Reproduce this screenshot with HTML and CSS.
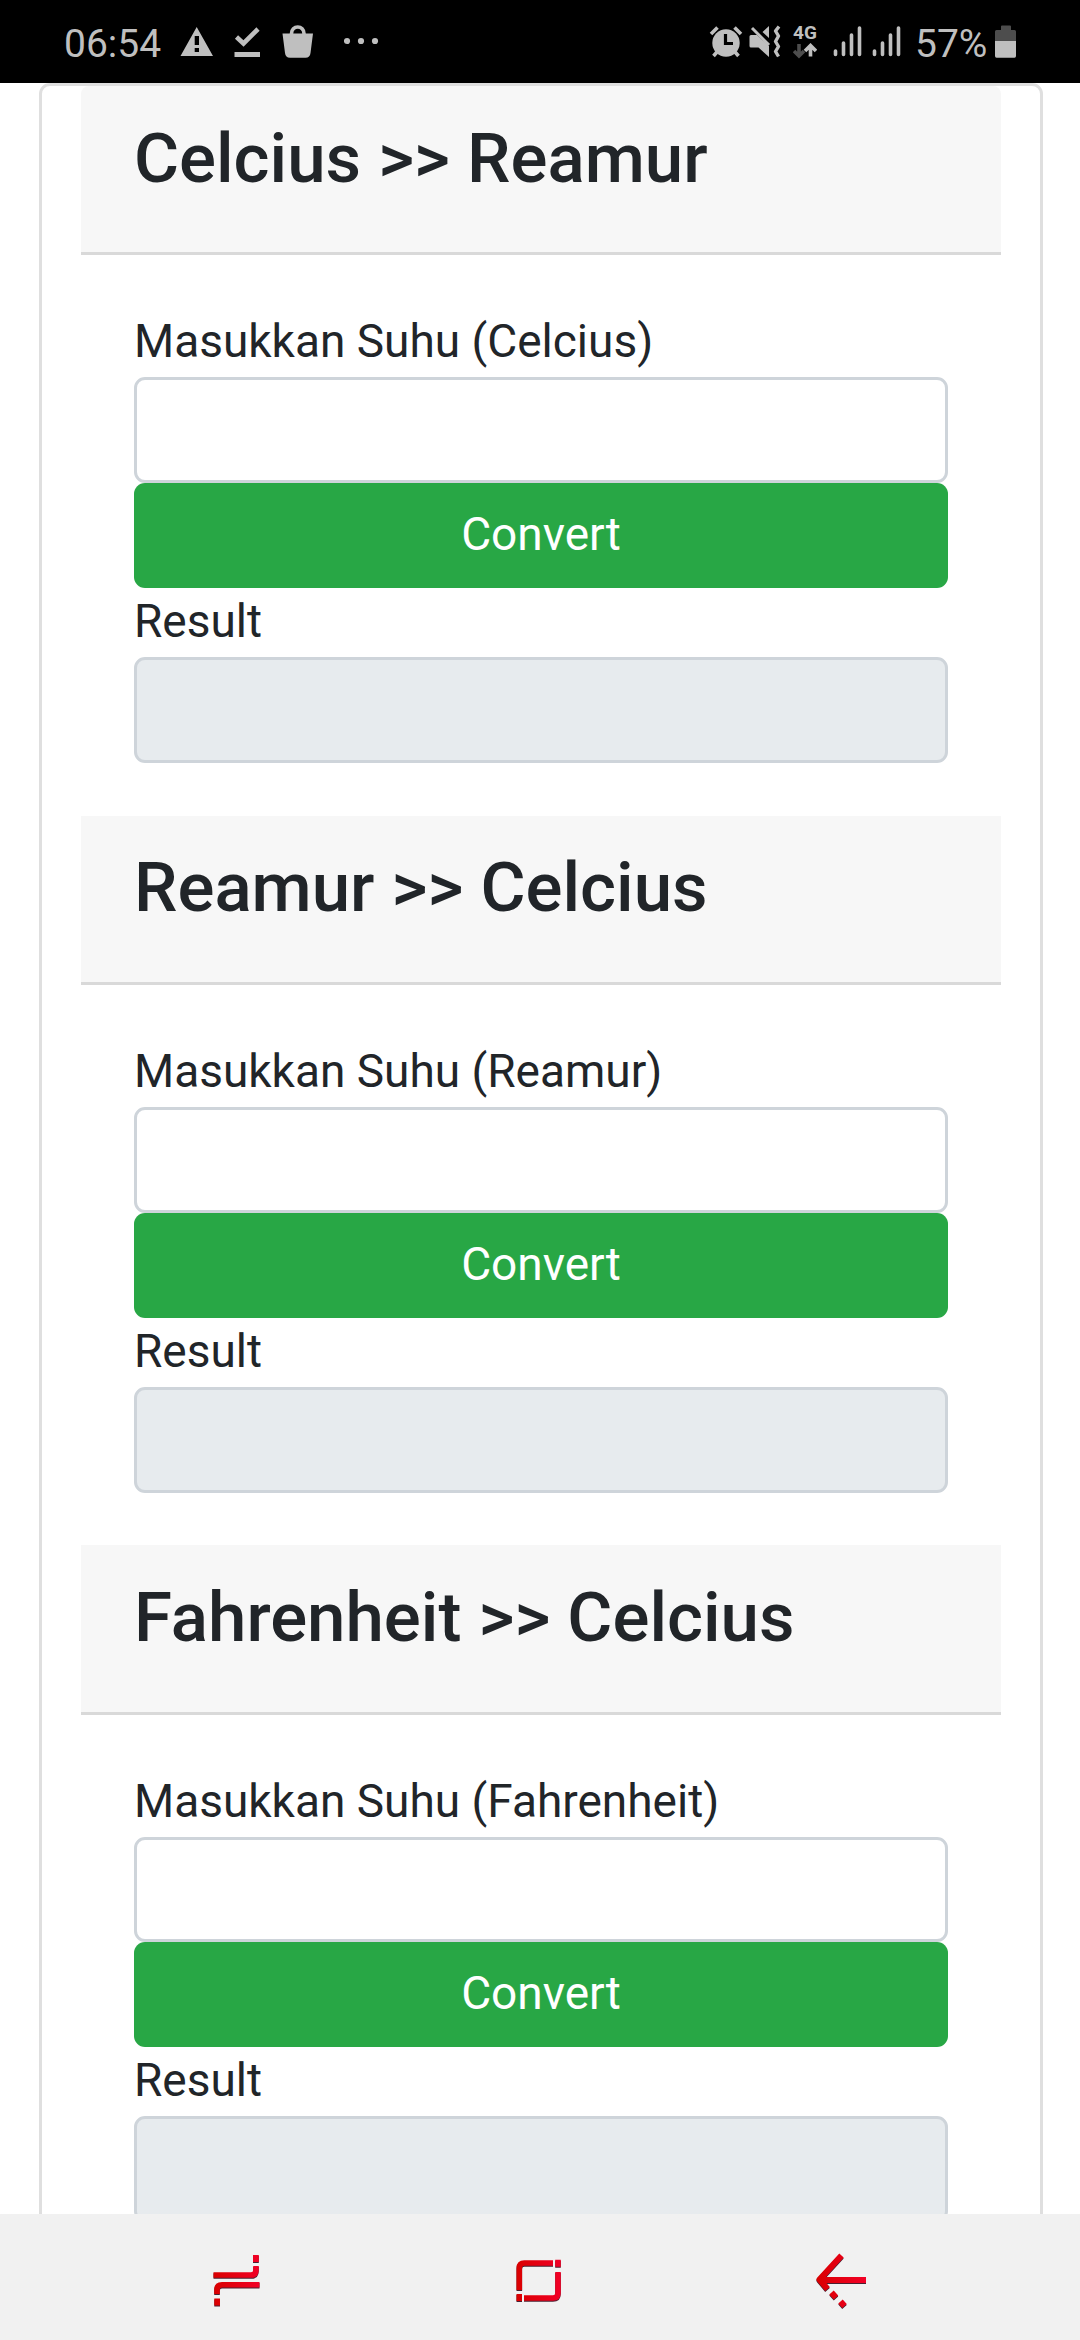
FILE: index.html
```html
<!DOCTYPE html>
<html lang="id">
<head>
<meta charset="utf-8">
<title>Konversi Suhu</title>
<link rel="stylesheet" href="styles.css">
</head>
<body>
<div class="screen">
  <header class="status">
    <div class="status-left">
      <span class="clock">06:54</span>
      <svg class="warn" width="34" height="83" viewBox="180 0 34 83"><path fill-rule="evenodd" d="M196.700 27L213 56H180.500ZM194.700 36V45H199V36ZM194.700 48V52H199V48Z"/></svg>
      <svg class="done" width="26" height="83" viewBox="234 0 26 83"><path d="M236.500 37L243.500 43.500L258 29" fill="none" stroke="#bfbfbf" stroke-width="4.600"/><path d="M234.500 52H260V57H234.500Z"/></svg>
      <svg class="bag" width="31" height="83" viewBox="282 0 31 83"><path d="M282.500 33.500H313L310.500 53Q310 57.700 305.500 57.700H290Q285.500 57.700 285 53Z"/><path d="M291.500 35V33.500A6.200 6.500 0 0 1 304 33.500V35" fill="none" stroke="#bfbfbf" stroke-width="3.600"/></svg>
      <svg class="more" width="35" height="83" viewBox="344 0 35 83"><circle cx="347" cy="41" r="3.100"/><circle cx="361" cy="41" r="3.100"/><circle cx="375" cy="41" r="3.100"/></svg>
    </div>
    <div class="status-right">
      <svg width="34" height="83" viewBox="709 0 34 83"><circle cx="726" cy="43" r="13.700"/><path d="M711 34L717.500 27.500M741 34L734.500 27.500M717 52L713.500 56M735 52L738.500 56" fill="none" stroke="#bfbfbf" stroke-width="3.600"/><path d="M725.500 34V43.500H733" fill="none" stroke="#000" stroke-width="3.200"/></svg>
      <svg class="mute" width="32" height="83" viewBox="749 0 32 83"><path d="M749.500 36.500Q749.500 35 751 35H757L769 46V57L758.500 47.500H751Q749.500 47.500 749.500 46ZM762.500 32L769 26V38Z"/><path d="M752 28L769 45" fill="none" stroke="#bfbfbf" stroke-width="3"/><path d="M779 26.500L775.500 31L778.500 36L775.500 41.500L778.500 46.500L775.500 51.500L778.500 56.500" fill="none" stroke="#bfbfbf" stroke-width="3.400" stroke-linejoin="round"/></svg>
      <div class="network">
        <span class="network-label">4G</span>
        <svg width="24" height="16" viewBox="794 43 24 16"><path d="M800 44V56M795 51L800 56L805 51" fill="none" stroke="#4d4d4d" stroke-width="3.600"/><path d="M811.500 56.500V46M806 51L811.500 45.500L817 51" fill="none" stroke="#bfbfbf" stroke-width="3.600"/></svg>
      </div>
      <svg class="signal" width="29" height="83" viewBox="833 0 29 83"><path d="M835.500 51V54.500M843.500 43V54.500M851.500 35V54.500M859.500 28V54.500" fill="none" stroke="#bfbfbf" stroke-width="3.600" stroke-linecap="round"/></svg>
      <svg class="signal2" width="29" height="83" viewBox="833 0 29 83"><path d="M835.500 51V54.500M843.500 43V54.500M851.500 35V54.500M859.500 28V54.500" fill="none" stroke="#bfbfbf" stroke-width="3.600" stroke-linecap="round"/></svg>
      <span class="percent">57%</span>
      <svg width="21" height="83" viewBox="995 0 21 83"><path fill="#4d4d4d" d="M1001 30V26.500Q1001 25.500 1002 25.500H1010Q1011 25.500 1011 26.500V30H1014.500Q1016 30 1016 31.500V41H995V31.500Q995 30 996.500 30Z"/><path d="M995 41H1016V56Q1016 57.800 1014.500 57.800H996.500Q995 57.800 995 56Z"/></svg>
    </div>
  </header>

  <main class="page">
    <div class="card">
      <section class="converter">
        <h3 class="card-header card-header-first">Celcius &gt;&gt; Reamur</h3>
        <form class="card-body">
          <label class="label">Masukkan Suhu (Celcius)</label>
          <input class="field" type="text">
          <button class="button" type="button">Convert</button>
          <label class="label">Result</label>
          <input class="field field-disabled" type="text" disabled>
        </form>
      </section>
      <section class="converter">
        <h3 class="card-header">Reamur &gt;&gt; Celcius</h3>
        <form class="card-body">
          <label class="label">Masukkan Suhu (Reamur)</label>
          <input class="field" type="text">
          <button class="button" type="button">Convert</button>
          <label class="label">Result</label>
          <input class="field field-disabled" type="text" disabled>
        </form>
      </section>
      <section class="converter">
        <h3 class="card-header">Fahrenheit &gt;&gt; Celcius</h3>
        <form class="card-body">
          <label class="label">Masukkan Suhu (Fahrenheit)</label>
          <input class="field" type="text">
          <button class="button" type="button">Convert</button>
          <label class="label">Result</label>
          <input class="field field-disabled" type="text" disabled>
        </form>
      </section>
    </div>
  </main>

  <nav class="navbar">
    <svg class="nav-icon" width="50" height="56" viewBox="212 2253 50 56">
      <defs><linearGradient id="red" gradientUnits="userSpaceOnUse" x1="213" y1="0" x2="260" y2="0"><stop offset="0" stop-color="#d90000"/><stop offset="1" stop-color="#f20026"/></linearGradient></defs>
      <g fill="none" stroke="url(#red)" stroke-width="5.600"><path d="M213.500 2275H251Q256 2275 256 2270V2266M259.500 2284.800H222Q217 2284.800 217 2289.500V2294"/><path d="M253 2258.500H258.800M214.300 2302H220" stroke-width="7"/></g>
    </svg>
    <svg class="nav-icon" width="50" height="46" viewBox="514 2257 50 46">
      <defs><linearGradient id="red2" gradientUnits="userSpaceOnUse" x1="516" y1="0" x2="561" y2="0"><stop offset="0" stop-color="#d90000"/><stop offset="1" stop-color="#f20026"/></linearGradient></defs>
      <g fill="none" stroke="url(#red2)" stroke-width="5.600"><path d="M519.300 2289V2267Q519.300 2262 524.300 2262H553M558 2271V2292Q558 2297 553 2297H524"/><path d="M555.200 2262.200H560.800M516.500 2296.500H522" stroke-width="7"/></g>
    </svg>
    <svg class="nav-icon" width="54" height="60" viewBox="814 2250 54 60">
      <defs><linearGradient id="red3" gradientUnits="userSpaceOnUse" x1="816" y1="0" x2="866" y2="0"><stop offset="0" stop-color="#d90000"/><stop offset="1" stop-color="#f20026"/></linearGradient></defs>
      <g fill="none" stroke="url(#red3)" stroke-width="6" stroke-linejoin="round"><path d="M841.500 2254.500L819.500 2278.500L827.500 2288M820 2279H866M831.500 2291.500L836 2296.500M840.500 2300.500L844.500 2305"/></g>
    </svg>
  </nav>
</div>
</body>
</html>
```

FILE: styles.css
```css
* {
  box-sizing: border-box;
}

body {
  margin: 0;
  background: #fff;
  color: #212529;
  font-family: Roboto, "Noto Sans", sans-serif;
}

.screen {
  display: flex;
  flex-direction: column;
  width: 1080px;
  height: 2340px;
  overflow: hidden;
}

/* Status bar */
.status {
  display: flex;
  flex: none;
  justify-content: space-between;
  height: 83px;
  padding: 0 64px;
  background: #000;
  color: #bfbfbf;
}

.status svg {
  display: block;
  flex: none;
  fill: #bfbfbf;
}

.status-left,
.status-right {
  display: flex;
}

.clock,
.percent {
  flex: none;
  font-size: 39px;
  line-height: 46px;
  padding-top: 21px;
  white-space: nowrap;
}

.clock {
  width: 116px;
}

.done {
  margin-left: 20px;
}

.bag {
  margin-left: 22px;
}

.more {
  margin-left: 31px;
}

.mute {
  margin-left: 6px;
}

.network {
  display: flex;
  flex-direction: column;
  align-items: center;
  width: 26px;
  margin-left: 11px;
  padding-top: 23px;
}

.network-label {
  font-size: 19px;
  font-weight: 700;
  line-height: 20px;
}

.signal {
  margin-left: 15px;
}

.signal2 {
  margin-left: 10px;
}

.percent {
  width: 80px;
  margin-left: 14px;
}

/* Converter card */
.page {
  flex: 1;
  min-height: 0;
  overflow: hidden;
  padding: 0 37px 0 39px;
}

.card {
  padding: 0 39px;
  border: 3px solid #dfdfdf;
  border-radius: 11px;
}

.converter {
  height: 729.700px;
}

.card-header {
  height: 169.400px;
  margin: 0;
  padding: 30.500px 53px 0;
  border-bottom: 3px solid #d9d9d9;
  background: #f7f7f7;
  font-size: 69px;
  font-weight: 500;
  line-height: 84px;
  white-space: nowrap;
}

.card-header-first {
  border-radius: 8px 8px 0 0;
}

.card-body {
  display: flex;
  flex-direction: column;
  padding: 52.900px 53px 0;
}

.label {
  height: 69px;
  font-size: 46px;
  line-height: 66px;
}

.field {
  width: 100%;
  height: 105.800px;
  margin: 0;
  padding: 0 32px;
  border: 3px solid #ced4da;
  border-radius: 11px;
  background: #fff;
  font: inherit;
  font-size: 46px;
}

.field-disabled {
  background: #e7ebee;
}

.button {
  height: 105px;
  padding: 0 0 3px;
  border: 0;
  border-radius: 11px;
  background: #28a745;
  color: #fff;
  font: inherit;
  font-size: 46px;
  line-height: 100px;
}

/* Navigation bar */
.navbar {
  display: grid;
  flex: none;
  grid-template-columns: repeat(3, 302px);
  place-items: center;
  height: 126px;
  padding: 8px 0 0 86px;
  background: #f1f1f1;
}

.nav-icon {
  filter: drop-shadow(0 1.500px 0.300px #4a2030);
}
```
